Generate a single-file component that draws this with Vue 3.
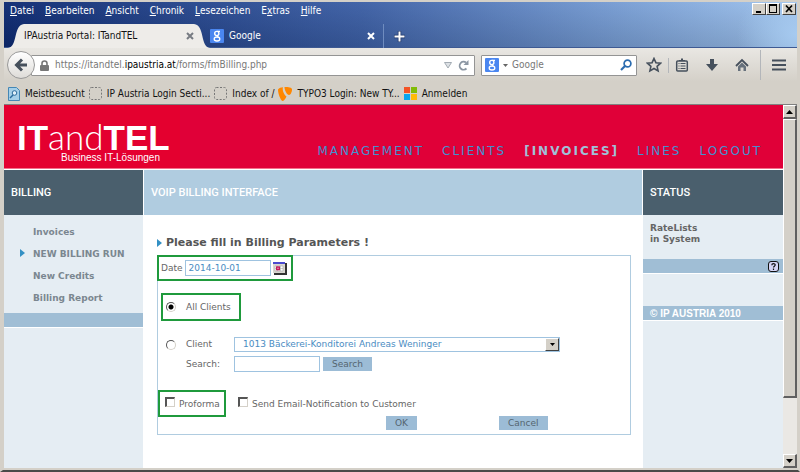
<script setup>
import { ref } from 'vue'

const menus = [
  ['', 'D', 'atei'],
  ['', 'B', 'earbeiten'],
  ['', 'A', 'nsicht'],
  ['', 'C', 'hronik'],
  ['', 'L', 'esezeichen'],
  ['E', 'x', 'tras'],
  ['', 'H', 'ilfe'],
]
const navLinks = [
  { label: 'MANAGEMENT' },
  { label: 'CLIENTS' },
  { label: '[INVOICES]', active: true },
  { label: 'LINES' },
  { label: 'LOGOUT' },
]
const sideLinks = [
  { label: 'Invoices' },
  { label: 'NEW BILLING RUN', active: true },
  { label: 'New Credits' },
  { label: 'Billing Report' },
]

const date = ref('2014-10-01')
const scope = ref('all')
const client = ref('1013')
const search = ref('')
const webSearch = ref('')
const proforma = ref(false)
const notify = ref(false)
</script>

<template>
  <div class="window">
    <div class="titlebar">
      <div class="menurow">
        <nav class="menus">
          <button v-for="m in menus" :key="m[1]" type="button" class="menu">{{ m[0] }}<u>{{ m[1] }}</u>{{ m[2] }}</button>
        </nav>
        <div class="winbtns">
          <button type="button" aria-label="Minimieren">
            <svg width="12" height="10" viewBox="0 0 12 10"><path d="M3 7h5v2H3z" /></svg>
          </button>
          <button type="button" aria-label="Maximieren">
            <svg width="12" height="10" viewBox="0 0 12 10"><path fill-rule="evenodd" d="M2 0h8v9H2zM3 2v6h6V2z" /></svg>
          </button>
          <button type="button" class="close" aria-label="Schließen">
            <svg width="12" height="10" viewBox="0 0 12 10"><path d="M3 1.500l6 6.500M9 1.500l-6 6.500" stroke="#000" stroke-width="1.700" /></svg>
          </button>
        </div>
      </div>
      <div class="tabs">
        <div class="tab current">
          <svg class="curve" width="16" height="24" viewBox="0 0 16 24"><path d="M0 24C10 23 5 1 16 0v24z" fill="#eeece9" /></svg>
          <div class="tabbody">
            <span>IPAustria Portal: ITandTEL</span>
            <button type="button" class="tabx" aria-label="Tab schließen">
              <svg width="8" height="8" viewBox="0 0 8 8"><path d="M1 1l6 6M7 1L1 7" stroke="#777b82" stroke-width="2" /></svg>
            </button>
          </div>
          <svg class="curve" width="16" height="24" viewBox="0 0 16 24"><path d="M16 24C6 23 11 1 0 0v24z" fill="#eeece9" /></svg>
        </div>
        <div class="tab other">
          <svg width="14" height="14" viewBox="0 0 14 14">
            <rect width="14" height="14" rx="1" fill="#4a86f0" />
            <circle cx="6.800" cy="4.500" r="2.100" fill="none" stroke="#fff" stroke-width="1.400" />
            <ellipse cx="7" cy="10" rx="2.800" ry="2" fill="none" stroke="#fff" stroke-width="1.300" />
            <path d="M7 2.300h3M7 6.500l1.500 2" stroke="#fff" stroke-width="1.200" />
          </svg>
          <span>Google</span>
          <button type="button" class="tabx" aria-label="Tab schließen">
            <svg width="8" height="8" viewBox="0 0 8 8"><path d="M1 1l6 6M7 1L1 7" stroke="#fff" stroke-width="2" /></svg>
          </button>
        </div>
        <button type="button" class="newtab" aria-label="Neuer Tab">
          <svg width="11" height="11" viewBox="0 0 11 11"><path d="M5.500 0v11M0 5.500h11" stroke="#1e3566" stroke-width="3.400" /><path d="M5.500 .5v10M.5 5.500h10" stroke="#fff" stroke-width="2" /></svg>
        </button>
      </div>
    </div>

    <div class="toolbar">
      <div class="navrow">
        <button type="button" class="back" aria-label="Zurück">
          <svg width="14" height="14" viewBox="0 0 14 14"><path d="M8 1.500L2.500 7 8 12.500M3 7h10" fill="none" stroke="#46505c" stroke-width="3" /></svg>
        </button>
        <div class="url">
          <svg width="9" height="11" viewBox="0 0 9 11"><rect y="5" width="9" height="6" rx="1" fill="#777" /><path d="M2 6V3.500a2.500 2.500 0 0 1 5 0V6" fill="none" stroke="#777" stroke-width="1.600" /></svg>
          <span class="address">https://itandtel.<b>ipaustria.at</b>/forms/fmBilling.php</span>
          <svg width="8" height="7" viewBox="0 0 8 7"><path d="M.5.5h7L4 6z" fill="#dde1e5" stroke="#a3abb3" /></svg>
          <button type="button" class="plain" aria-label="Neu laden">
            <svg width="11" height="11" viewBox="0 0 11 11"><path d="M8.500 8.500A4 4 0 1 1 8 2.500" fill="none" stroke="#8b96a3" stroke-width="1.800" /><path d="M10.500 0v5h-5z" fill="#8b96a3" /></svg>
          </button>
        </div>
        <div class="find">
          <svg width="14" height="14" viewBox="0 0 14 14">
            <rect width="14" height="14" rx="1" fill="#4a86f0" />
            <circle cx="6.800" cy="4.500" r="2.100" fill="none" stroke="#fff" stroke-width="1.400" />
            <ellipse cx="7" cy="10" rx="2.800" ry="2" fill="none" stroke="#fff" stroke-width="1.300" />
            <path d="M7 2.300h3M7 6.500l1.500 2" stroke="#fff" stroke-width="1.200" />
          </svg>
          <svg width="5" height="3" viewBox="0 0 5 3"><path d="M0 0h5L2.500 3z" fill="#666" /></svg>
          <input v-model="webSearch" type="text" placeholder="Google" aria-label="Google" />
          <button type="button" class="plain" aria-label="Suchen">
            <svg width="12" height="12" viewBox="0 0 12 12"><circle cx="7.500" cy="4.500" r="3.400" fill="none" stroke="#2b6cb0" stroke-width="1.700" /><path d="M5 7L1 11" stroke="#2b6cb0" stroke-width="2.200" /></svg>
          </button>
        </div>
        <div class="actions">
          <button type="button" class="plain" aria-label="Lesezeichen setzen">
            <svg width="16" height="16" viewBox="0 0 16 16"><path d="M8 1.500l1.900 4.200 4.600.5-3.400 3.100 1 4.600L8 11.500l-4.100 2.400 1-4.600L1.500 6.200l4.600-.5z" fill="none" stroke="#46505c" stroke-width="1.600" /></svg>
          </button>
          <i class="sep short"></i>
          <button type="button" class="plain" aria-label="Lesezeichen anzeigen">
            <svg width="14" height="14" viewBox="0 0 14 14"><rect x="1.700" y="3" width="10.600" height="10" rx="1" fill="none" stroke="#46505c" stroke-width="1.500" /><path d="M4 3V2h2V.5h2V2h2v1z" fill="#46505c" /><path d="M3.500 5.500h1m1 0h5M3.500 8h1m1 0h5M3.500 10.500h1m1 0h5" stroke="#46505c" stroke-width="1.100" /></svg>
          </button>
          <button type="button" class="plain" aria-label="Downloads">
            <svg width="14" height="14" viewBox="0 0 14 14"><path d="M5 1h4v5h4l-6 7-6-7h4z" fill="#46505c" /></svg>
          </button>
          <button type="button" class="plain" aria-label="Startseite">
            <svg width="14" height="14" viewBox="0 0 14 14"><path d="M1 8l6-6 6 6" fill="none" stroke="#46505c" stroke-width="1.800" /><path d="M3 8.500l4-4 4 4V13H8.500V9.500h-3V13H3z" fill="#66707b" /></svg>
          </button>
          <i class="sep"></i>
          <button type="button" class="plain" aria-label="Menü">
            <svg width="14" height="12" viewBox="0 0 14 12"><path d="M0 1.500h14M0 6h14M0 10.500h14" stroke="#46505c" stroke-width="2" /></svg>
          </button>
        </div>
      </div>
      <div class="bookmarks">
        <a href="#" class="bm">
          <svg width="12" height="14" viewBox="0 0 12 14"><path d="M.5.5h8l3 3v10H.5z" fill="#a5cfe8" stroke="#4587b5" /><circle cx="6.500" cy="6" r="2.300" fill="#e3f1fa" stroke="#2b6b9c" /><path d="M5 8l-3 3" stroke="#2b6b9c" stroke-width="1.500" /></svg>
          Meistbesucht
        </a>
        <a href="#" class="bm">
          <svg width="13" height="13" viewBox="0 0 13 13"><rect x=".5" y=".5" width="12" height="12" rx="2" fill="none" stroke="#777" stroke-dasharray="2 1.500" /></svg>
          IP Austria Login Secti...
        </a>
        <a href="#" class="bm">
          <svg width="13" height="13" viewBox="0 0 13 13"><rect x=".5" y=".5" width="12" height="12" rx="2" fill="none" stroke="#777" stroke-dasharray="2 1.500" /></svg>
          Index of /
        </a>
        <a href="#" class="bm">
          <svg width="14" height="14" viewBox="0 0 14 14"><path d="M0 2.500C1 1 3 .5 5 .3 4 3 6 8 8.500 9.500 7.500 12 5.500 14 4.500 14 2.500 13 0 7 0 2.500z" fill="#ff8700" /><path d="M6.500 0c4 0 7.500.3 7.500 2.500C14 5 12.500 8 11 8 9 8 6.500 3.500 6.500 0z" fill="#ff8700" /></svg>
          TYPO3 Login: New TY...
        </a>
        <a href="#" class="bm">
          <svg width="13" height="13" viewBox="0 0 13 13"><path d="M0 0h6v6H0z" fill="#f35325" /><path d="M7 0h6v6H7z" fill="#81bc06" /><path d="M0 7h6v6H0z" fill="#05a6f0" /><path d="M7 7h6v6H7z" fill="#ffba08" /></svg>
          Anmelden
        </a>
      </div>
    </div>

    <div class="viewport">
      <div class="page">
        <header class="banner">
          <a href="#" class="logo">
            <span class="word"><b>IT</b><span class="thin">and</span><b>TEL</b></span>
            <span class="tagline">Business IT-Lösungen</span>
          </a>
          <nav class="mainnav">
            <a v-for="l in navLinks" :key="l.label" href="#" :class="{ active: l.active }">{{ l.label }}</a>
          </nav>
        </header>

        <div class="columns">
          <aside class="side">
            <h2>BILLING</h2>
            <nav class="sidenav">
              <a v-for="l in sideLinks" :key="l.label" href="#" :class="{ active: l.active }">{{ l.label }}</a>
            </nav>
            <div class="band"></div>
          </aside>

          <main class="main">
            <h2>VOIP BILLING INTERFACE</h2>
            <div class="content">
              <h3>Please fill in Billing Parameters !</h3>
              <form class="form" @submit.prevent>
                <div class="mark daterow">
                  <label for="date">Date</label>
                  <input id="date" v-model="date" type="text" class="field" />
                  <button type="button" class="plain" aria-label="Kalender">
                    <svg width="14" height="13" viewBox="0 0 14 13"><path d="M1 1h13v12H1z" fill="#333" /><path d="M0 0h12v11H0z" fill="#d9d6d0" /><path d="M0 0h12v2H0z" fill="#4a4ad0" /><path d="M2 4h8v5H2z" fill="#fff" /><path d="M2 4h8v5H2zM2 6.500h8M4.500 4v5M7.500 4v5" fill="none" stroke="#aaa" stroke-width=".6" /><path d="M3 4.300h4v4H3z" fill="#c2185b" /><path d="M4.500 5.800h1v1h-1z" fill="#fff" /></svg>
                  </button>
                </div>
                <label class="mark allrow"><input v-model="scope" type="radio" value="all" name="scope" />All Clients</label>
                <div class="grid">
                  <label class="pick"><input v-model="scope" type="radio" value="one" name="scope" />Client</label>
                  <div class="selectwrap">
                    <select v-model="client" aria-label="Client">
                      <option value="1013">1013 Bäckerei-Konditorei Andreas Weninger</option>
                    </select>
                    <span class="arrow"><svg width="5" height="3" viewBox="0 0 5 3"><path d="M0 0h5L2.500 3z" /></svg></span>
                  </div>
                  <label for="search" class="searchlabel">Search:</label>
                  <div class="searchrow">
                    <input id="search" v-model="search" type="text" class="field" />
                    <button type="button" class="btn">Search</button>
                  </div>
                </div>
                <div class="checks">
                  <label class="mark check"><input v-model="proforma" type="checkbox" />Proforma</label>
                  <label class="check"><input v-model="notify" type="checkbox" />Send Email-Notification to Customer</label>
                </div>
                <div class="buttons">
                  <button type="submit" class="btn">OK</button>
                  <button type="button" class="btn">Cancel</button>
                </div>
              </form>
            </div>
          </main>

          <aside class="side">
            <h2>STATUS</h2>
            <p class="rates"><a href="#">RateLists<br />in System</a></p>
            <div class="band help">
              <button type="button" class="plain" aria-label="Hilfe">
                <svg width="11" height="11" viewBox="0 0 11 11"><rect x=".5" y=".5" width="10" height="10" rx="2.500" fill="#d5d5f5" stroke="#111" /><path d="M3.800 4.200C3.800 2 7.300 2.200 7.200 4c0 1.200-1.600 1.200-1.700 2.500M5.500 7.600v1.300" fill="none" stroke="#111" stroke-width="1.200" /></svg>
              </button>
            </div>
            <div class="band copy">© IP AUSTRIA 2010</div>
          </aside>
        </div>
      </div>
      <div class="scroll">
        <span class="bevel cap"><svg width="7" height="4" viewBox="0 0 7 4"><path d="M0 4h7L3.500 0z" /></svg></span>
        <span class="bevel thumb"></span>
        <span class="rest"></span>
        <span class="bevel cap"><svg width="7" height="4" viewBox="0 0 7 4"><path d="M0 0h7L3.500 4z" /></svg></span>
      </div>
    </div>
  </div>
</template>

<style>
body {
  background: #d4d0c8;
}
</style>

<style scoped>
* {
  box-sizing: border-box;
}
button,
input,
select {
  font: inherit;
  color: inherit;
  margin: 0;
}
a {
  color: inherit;
  text-decoration: none;
}
svg {
  display: block;
  flex: none;
}
.window {
  min-height: 100vh;
  display: flex;
  flex-direction: column;
  background: #d4d0c8;
  border: 2px solid #d4d0c8;
  border-left-width: 3px;
  border-bottom-color: #4a4a48;
  padding: 0 1px 2px 1px;
  font: 10px/14px 'DejaVu Sans Condensed', 'Noto Sans', sans-serif;
  color: #111;
}
.plain {
  background: none;
  border: 0;
  padding: 0;
}

/* title bar */
.titlebar {
  height: 46px;
  background: radial-gradient(ellipse 60px 50px at 100% 70%, #a6caf0, rgba(166, 202, 240, 0)), linear-gradient(180deg, rgba(255, 255, 255, 0.04), rgba(0, 0, 0, 0.12)), linear-gradient(90deg, #0d2a72, #3c5fa5 45%, #7298d0 75%, #a0c4ee);
  border-bottom: 1px solid #3e5a93;
}
.menurow {
  display: flex;
  justify-content: space-between;
  height: 22px;
}
.menus {
  display: flex;
  gap: 11px;
  padding: 2px 0 0 6px;
}
.menu {
  background: none;
  border: 0;
  padding: 0;
  height: 14px;
  color: #fff;
}
.winbtns {
  display: flex;
  padding: 1px 1px 0 0;
}
.winbtns button {
  width: 14px;
  height: 12px;
  padding: 0;
  background: #d4d0c8;
  border: 1px solid #fff;
  border-right-color: #404040;
  border-bottom-color: #404040;
}
.winbtns .close {
  margin-left: 2px;
}
.tabs {
  display: flex;
  height: 24px;
  color: #fff;
}
.tab {
  display: flex;
  align-items: center;
}
.current {
  width: 202px;
  margin-left: 4px;
  color: #111;
}
.tabbody {
  flex: 1;
  height: 24px;
  display: flex;
  align-items: center;
  justify-content: space-between;
  background: #eeece9;
}
.tabx {
  background: none;
  border: 0;
  padding: 0;
}
.other {
  width: 174px;
  gap: 5px;
  padding: 0 8px 0 0;
  border-right: 1px solid #6f8cbf;
}
.other .tabx {
  margin-left: auto;
}
.newtab {
  background: none;
  border: 0;
  padding: 0 10px;
}

/* toolbars */
.toolbar {
  height: 57px;
  background: linear-gradient(#e9e7e3, #d4d0c8 60%);
  border-bottom: 1px solid #808080;
}
.navrow {
  display: flex;
  align-items: center;
  height: 34px;
  padding: 0 11px 0 3px;
}
.back {
  width: 28px;
  height: 28px;
  flex: none;
  display: flex;
  align-items: center;
  justify-content: center;
  padding: 0;
  border: 1px solid #999;
  border-radius: 50%;
  background: linear-gradient(#fff, #dedcd8);
  z-index: 1;
}
.url,
.find {
  display: flex;
  align-items: center;
  height: 21px;
  border: 1px solid #949494;
  background: #fff;
  border-radius: 1px;
}
.url {
  flex: 1;
  margin-left: -4px;
  padding: 0 5px 0 8px;
  gap: 6px;
  color: #777;
}
.address {
  flex: 1;
}
.address b {
  font-weight: normal;
  color: #000;
}
.find {
  width: 156px;
  margin-left: 6px;
  padding: 0 4px 0 3px;
  gap: 4px;
}
.find input {
  flex: 1;
  min-width: 0;
  border: 0;
  padding: 0;
  background: none;
  outline: 0;
}
.find input::placeholder {
  color: #777;
  opacity: 1;
}
.actions {
  display: flex;
  align-items: center;
  gap: 16px;
  padding-left: 9px;
}
.sep {
  width: 1px;
  height: 30px;
  background: #b3b6ba;
  margin: 0 -5px;
}
.sep.short {
  height: 15px;
  margin: 0 -10px;
}
.bookmarks {
  display: flex;
  align-items: center;
  gap: 4px;
  height: 23px;
  padding-left: 4px;
}
.bm {
  display: flex;
  align-items: center;
  gap: 5px;
  white-space: nowrap;
}

/* page */
.viewport {
  flex: 1;
  display: flex;
}
.page {
  flex: 1;
  display: flex;
  flex-direction: column;
  background: #fff;
  font: 9px/11px 'DejaVu Sans', Verdana, sans-serif;
  color: #666;
}
.banner {
  display: flex;
  justify-content: space-between;
  align-items: flex-end;
  height: 64px;
  background: linear-gradient(90deg, #e4002f 176px, #e00038 176px);
  border-bottom: 1px solid #f3708c;
  color: #fff;
}
.logo {
  display: flex;
  flex-direction: column;
  padding: 0 0 4px 13px;
}
.word {
  display: flex;
  align-items: baseline;
  font: 35px/28px 'Liberation Sans', Arial, sans-serif;
}
.thin {
  font-family: Lato, sans-serif;
  font-weight: 300;
}
.tagline {
  padding-left: 44px;
  font: 10px/12px 'Liberation Sans', Arial, sans-serif;
}
.mainnav {
  display: flex;
  gap: 18px;
  padding: 0 21px 9px 0;
  font-size: 12px;
  line-height: 16px;
  letter-spacing: 2px;
  color: #4390d0;
}
.mainnav .active {
  font-weight: bold;
  color: #9fc0d8;
}
.columns {
  flex: 1;
  display: grid;
  grid-template-columns: 139px 1fr 140px;
  column-gap: 1px;
  padding-top: 1px;
}
h2 {
  margin: 0;
  height: 45px;
  padding-left: 7px;
  font: 500 11px/45px Roboto, Arial, sans-serif;
  color: #fff;
  background: #4a5f6d;
}
.side {
  background: #e5edf3;
}
.main h2 {
  background: #b0cce0;
}
.sidenav {
  display: flex;
  flex-direction: column;
  gap: 11px;
  padding: 12px 0 9px 29px;
  font-weight: bold;
  color: #7b8790;
}
.sidenav .active::before,
h3::before {
  content: '';
  display: inline-block;
  border: 4px solid transparent;
  border-left: 5px solid #3390c4;
  border-right: 0;
}
.sidenav .active::before {
  margin: 0 8px 0 -13px;
}
.band {
  height: 15px;
  background: #a0bed5;
  border-bottom: 1px solid #fff;
}
.rates {
  margin: 0;
  padding: 8px 7px 0;
  height: 44px;
  font-weight: bold;
}
.help {
  display: flex;
  justify-content: flex-end;
  align-items: center;
  padding-right: 4px;
}
.copy {
  margin-top: 32px;
  padding-left: 7px;
  font: bold 10px/15px 'Liberation Sans', Arial, sans-serif;
  color: #fff;
}
.content {
  padding: 20px 11px 20px 13px;
}
h3 {
  margin: 0 0 5px;
  display: flex;
  align-items: center;
  gap: 4px;
  font-size: 11px;
  line-height: 15px;
  color: #555;
}
.form {
  border: 1px solid #b0cce0;
  padding-bottom: 4px;
}
.mark {
  border: 2px solid #1f9a3c;
}
.field {
  border: 1px solid #9fc3e0;
  background: #fff;
  height: 16px;
  width: 86px;
  padding: 0 3px;
  color: #4a8cc2;
  outline: 0;
}
.daterow {
  display: flex;
  align-items: center;
  width: fit-content;
  height: 26px;
  margin: -1px 0 0 -1px;
  padding: 0 4px 0 2px;
  gap: 2px;
}
.allrow {
  display: flex;
  align-items: center;
  width: 80px;
  height: 28px;
  margin: 12px 0 0 3px;
  padding-left: 3px;
  gap: 10px;
  white-space: nowrap;
}
input[type='radio'],
input[type='checkbox'] {
  appearance: none;
  flex: none;
  width: 10px;
  height: 10px;
  background: #fff;
}
input[type='radio'] {
  border: 1px solid #555;
  border-right-color: #d4d0c8;
  border-bottom-color: #d4d0c8;
  border-radius: 50%;
}
input[type='radio']:checked {
  background: radial-gradient(circle, #000 2px, #fff 3px);
}
input[type='checkbox'] {
  border: 1px solid #d4d0c8;
  border-top: 2px solid #555;
  border-left: 2px solid #555;
  margin-bottom: 5px;
}
.grid {
  display: grid;
  grid-template-columns: 68px 1fr;
  align-items: center;
  row-gap: 4px;
  margin: 16px 0 0 8px;
}
.pick {
  display: flex;
  align-items: center;
  gap: 10px;
}
.searchlabel {
  padding-left: 20px;
}
.selectwrap {
  position: relative;
  max-width: 326px;
}
select {
  appearance: none;
  display: block;
  width: 100%;
  height: 15px;
  padding: 0 16px 0 8px;
  border: 1px solid #9fc3e0;
  border-radius: 0;
  background: #fff;
  color: #4a8cc2;
}
.arrow {
  position: absolute;
  top: 1px;
  right: 1px;
  width: 14px;
  height: 13px;
  display: flex;
  align-items: center;
  justify-content: center;
  background: #d4d0c8;
  border: 1px solid #fff;
  border-right-color: #404040;
  border-bottom-color: #404040;
  pointer-events: none;
}
.searchrow {
  display: flex;
  gap: 3px;
  align-items: center;
}
.btn {
  height: 14px;
  padding: 0 9px;
  border: 0;
  background: #9cbcd6;
  color: #55656f;
}
.checks {
  display: flex;
  align-items: center;
  gap: 12px;
  height: 25px;
  margin-top: 19px;
}
.check {
  display: flex;
  align-items: center;
  gap: 4px;
  height: 27px;
  padding-top: 2px;
}
.check.mark {
  width: 68px;
  padding-left: 5px;
}
.buttons {
  display: flex;
  gap: 82px;
  margin-left: 228px;
}

/* scroll bar */
.scroll {
  width: 14px;
  display: flex;
  flex-direction: column;
  background: #eae8e4;
}
.bevel {
  display: flex;
  align-items: center;
  justify-content: center;
  background: #d4d0c8;
  border: 1px solid #fff;
  border-right: 2px solid #606060;
  border-bottom: 2px solid #606060;
}
.cap {
  height: 14px;
}
.thumb {
  flex: 83;
}
.rest {
  flex: 17;
}
</style>
